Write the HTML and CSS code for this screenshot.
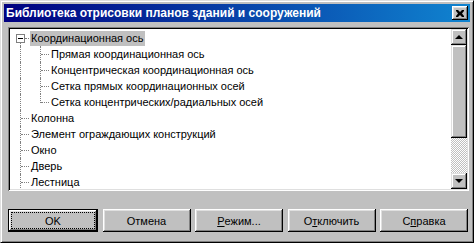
FILE: index.html
```html
<!DOCTYPE html>
<html lang="ru">
<head>
<meta charset="UTF-8">
<title>Библиотека отрисовки планов зданий и сооружений</title>
<link rel="stylesheet" href="styles.css">
</head>
<body>

<div class="window">
    <div class="titlebar">
        <span class="title">Библиотека отрисовки планов зданий и сооружений</span>
        <span class="close">
            <svg width="8" height="7" viewBox="0 0 8 7"><path d="M0 0h2l2 2 2-2h2v1l-2 2.5 2 2.5v1h-2l-2-2-2 2h-2v-1l2-2.5-2-2.5z" fill="#000"/></svg>
        </span>
    </div>
    <div class="content">
        <div class="tree">
            <div class="items">
                <div class="row"><span class="guide root"><span class="toggle"></span></span><span class="label selected">Координационная ось</span></div>
                <div class="row"><span class="guide line"></span><span class="guide tee"></span><span class="label">Прямая координационная ось</span></div>
                <div class="row"><span class="guide line"></span><span class="guide tee"></span><span class="label">Концентрическая координационная ось</span></div>
                <div class="row"><span class="guide line"></span><span class="guide tee"></span><span class="label">Сетка прямых координационных осей</span></div>
                <div class="row"><span class="guide line"></span><span class="guide corner"></span><span class="label">Сетка концентрических/радиальных осей</span></div>
                <div class="row"><span class="guide tee"></span><span class="label">Колонна</span></div>
                <div class="row"><span class="guide tee"></span><span class="label">Элемент ограждающих конструкций</span></div>
                <div class="row"><span class="guide tee"></span><span class="label">Окно</span></div>
                <div class="row"><span class="guide tee"></span><span class="label">Дверь</span></div>
                <div class="row"><span class="guide tee"></span><span class="label">Лестница</span></div>
                <div class="row"><span class="guide line"></span></div>
            </div>
            <div class="scrollbar">
                <div class="arrow up"></div>
                <div class="thumb"></div>
                <div class="track"></div>
                <div class="arrow down"></div>
            </div>
        </div>
        <div class="buttons">
            <button class="btn default"><span>OK</span></button>
            <button class="btn"><span>Отмена</span></button>
            <button class="btn"><span><u>Р</u>ежим...</span></button>
            <button class="btn"><span>О<u>т</u>ключить</span></button>
            <button class="btn"><span>С<u>п</u>равка</span></button>
        </div>
    </div>
</div>

</body>
</html>
```

FILE: styles.css
```css
body {
    margin: 0;
    background: #fff;
    font-family: "Liberation Sans", Arial, sans-serif;
    font-size: 11px;
}
.window {
    width: 474px;
    height: 243px;
    box-sizing: border-box;
    background: #c0c0c0;
    border-top: 1px solid #dfdfdf;
    border-left: 1px solid #dfdfdf;
    border-right: 1px solid #000;
    border-bottom: 1px solid #000;
    box-shadow: inset 1px 1px #fff, inset -1px -1px #808080;
    padding: 3px;
}
.titlebar {
    height: 18px;
    display: flex;
    align-items: center;
    justify-content: space-between;
    padding: 0 2px 0 2px;
    background: linear-gradient(to right, #000080, #1084d0);
}
.title {
    color: #fff;
    font-weight: bold;
    font-size: 12px;
}
.close {
    width: 16px;
    height: 14px;
    box-sizing: border-box;
    display: flex;
    align-items: center;
    justify-content: center;
    background: #c0c0c0;
    box-shadow: inset -1px -1px #000, inset 1px 1px #fff, inset -2px -2px #808080, inset 2px 2px #dfdfdf;
}
.content {
    padding: 5px 1px 0 4px;
}
.tree {
    height: 164px;
    box-sizing: border-box;
    display: flex;
    background: #fff;
    box-shadow: inset 1px 1px #808080, inset -1px -1px #fff, inset 2px 2px #000, inset -2px -2px #dfdfdf;
    padding: 2px;
}
.items {
    flex: 1;
    padding-top: 1px;
    overflow: hidden;
}
.row {
    display: flex;
    height: 16px;
    align-items: center;
}
.guide {
    position: relative;
    width: 20px;
    height: 16px;
    flex: none;
}
.guide::before,
.guide::after {
    content: "";
    position: absolute;
}
.line::before,
.tee::before {
    left: 10px;
    top: 0;
    bottom: 0;
    border-left: 1px dotted #808080;
}
.corner::before {
    left: 10px;
    top: 0;
    height: 9px;
    border-left: 1px dotted #808080;
}
.tee::after,
.corner::after {
    left: 11px;
    top: 8px;
    width: 8px;
    border-top: 1px dotted #808080;
}
.root::before {
    left: 10px;
    top: 13px;
    bottom: 0;
    border-left: 1px dotted #808080;
}
.root::after {
    left: 15px;
    top: 8px;
    width: 4px;
    border-top: 1px dotted #808080;
}
.toggle {
    position: absolute;
    left: 6px;
    top: 4px;
    width: 9px;
    height: 9px;
    box-sizing: border-box;
    border: 1px solid #808080;
    background: #fff;
    display: flex;
    align-items: center;
    justify-content: center;
}
.toggle::before {
    content: "";
    width: 5px;
    height: 1px;
    background: #000;
}
.label {
    padding: 1px 2px 1px 1px;
    line-height: 13px;
    white-space: nowrap;
    color: #000;
}
.selected {
    background: #c0c0c0;
}
.scrollbar {
    width: 16px;
    display: flex;
    flex-direction: column;
}
.arrow,
.thumb {
    background: #c0c0c0;
    box-shadow: inset -1px -1px #000, inset 1px 1px #dfdfdf, inset -2px -2px #808080, inset 2px 2px #fff;
}
.arrow {
    height: 16px;
    display: flex;
    align-items: center;
    justify-content: center;
}
.arrow::before {
    content: "";
    border-left: 4px solid transparent;
    border-right: 4px solid transparent;
}
.up::before {
    border-bottom: 4px solid #000;
}
.down::before {
    border-top: 4px solid #000;
}
.thumb {
    height: 93px;
}
.track {
    flex: 1;
    background: repeating-conic-gradient(#fff 0 25%, #c0c0c0 0 50%) 0 0 / 2px 2px;
}
.buttons {
    display: flex;
    justify-content: space-between;
    margin-top: 18px;
    margin-right: 1px;
}
.btn {
    width: 88px;
    height: 23px;
    padding: 3px;
    display: flex;
    border: none;
    background: #c0c0c0;
    box-shadow: inset -1px -1px #000, inset 1px 1px #fff, inset -2px -2px #808080, inset 2px 2px #dfdfdf;
    font-family: "Liberation Sans", Arial, sans-serif;
    font-size: 11px;
    color: #000;
}
.btn span {
    flex: 1;
    display: flex;
    align-items: center;
    justify-content: center;
    border: 1px solid transparent;
}
.default {
    width: 90px;
    border: 1px solid #000;
    padding: 2px;
}
.default span {
    border: 1px dotted #000;
}
```
